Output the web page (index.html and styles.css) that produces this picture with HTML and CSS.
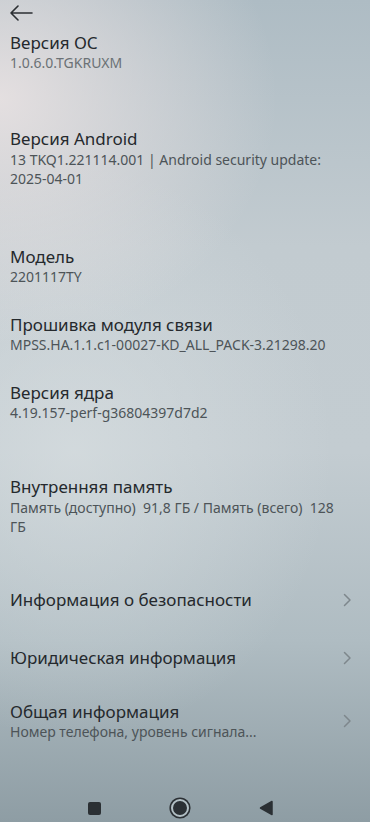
FILE: index.html
```html
<!DOCTYPE html>
<html lang="ru">
<head>
    <meta charset="UTF-8">
    <meta name="viewport" content="width=device-width, initial-scale=1.0">
    <title>Об устройстве</title>
    <link rel="stylesheet" href="styles.css">
</head>
<body>
    <div class="screen">
        <div class="topbar">
            <svg class="back" width="24" height="16" viewBox="0 0 24 16">
                <path d="M23 8H2M9 1L2 8l7 7" fill="none" stroke="#2b2f33" stroke-width="1.6" stroke-linecap="round" stroke-linejoin="round"/>
            </svg>
        </div>

        <div class="content">
            <div class="item item-os">
                <div class="item-title">Версия ОС</div>
                <div class="item-sub">1.0.6.0.TGKRUXM</div>
            </div>

            <div class="item item-android">
                <div class="item-title">Версия Android</div>
                <div class="item-sub">13 TKQ1.221114.001 | Android security update: <span class="nowrap">2025-04-01</span></div>
            </div>

            <div class="item item-model">
                <div class="item-title">Модель</div>
                <div class="item-sub">2201117TY</div>
            </div>

            <div class="item item-near">
                <div class="item-title">Прошивка модуля связи</div>
                <div class="item-sub">MPSS.HA.1.1.c1-00027-KD_ALL_PACK-3.21298.20</div>
            </div>

            <div class="item item-near">
                <div class="item-title">Версия ядра</div>
                <div class="item-sub">4.19.157-perf-g36804397d7d2</div>
            </div>

            <div class="item item-memory">
                <div class="item-title">Внутренняя память</div>
                <div class="item-sub">Память (доступно)&nbsp; 91,8 ГБ / Память (всего)&nbsp; 128 ГБ</div>
            </div>

            <div class="links">
                <div class="link-row">
                    <div class="item-title">Информация о безопасности</div>
                    <svg class="chevron" width="9" height="14" viewBox="0 0 9 14"><path d="M1.5 1.5L7 7l-5.5 5.5" fill="none" stroke="#7e878c" stroke-width="1.5" stroke-linecap="round" stroke-linejoin="round"/></svg>
                </div>
                <div class="link-row">
                    <div class="item-title">Юридическая информация</div>
                    <svg class="chevron" width="9" height="14" viewBox="0 0 9 14"><path d="M1.5 1.5L7 7l-5.5 5.5" fill="none" stroke="#7e878c" stroke-width="1.5" stroke-linecap="round" stroke-linejoin="round"/></svg>
                </div>
                <div class="link-row link-row-tall">
                    <div>
                        <div class="item-title">Общая информация</div>
                        <div class="item-sub">Номер телефона, уровень сигнала...</div>
                    </div>
                    <svg class="chevron" width="9" height="14" viewBox="0 0 9 14"><path d="M1.5 1.5L7 7l-5.5 5.5" fill="none" stroke="#7e878c" stroke-width="1.5" stroke-linecap="round" stroke-linejoin="round"/></svg>
                </div>
            </div>
        </div>

        <div class="navbar">
            <div class="nav-btn"><span class="nav-square"></span></div>
            <div class="nav-btn"><span class="nav-home"></span></div>
            <div class="nav-btn">
                <svg width="14" height="16" viewBox="0 0 14 16"><path d="M13 1.5v13L1.5 8z" fill="#2b3034" stroke="#2b3034" stroke-width="1.5" stroke-linejoin="round"/></svg>
            </div>
        </div>
    </div>
</body>
</html>
```

FILE: styles.css
```css
body {
    margin: 0;
    font-family: "Noto Sans", Roboto, sans-serif;
}

.screen {
    width: 370px;
    height: 822px;
    display: flex;
    flex-direction: column;
    overflow: hidden;
    background:
        radial-gradient(ellipse 75% 30% at 0% 12%, rgba(236, 228, 228, 0.85), rgba(236, 228, 228, 0) 100%),
        radial-gradient(ellipse 70% 35% at 20% 55%, rgba(220, 226, 228, 0.6), rgba(220, 226, 228, 0) 100%),
        linear-gradient(180deg, #aebcc4 0%, #c2cbd0 30%, #c3ccd1 55%, #afbcc2 78%, #8e9da4 100%);
}

.topbar {
    height: 32px;
    flex-shrink: 0;
    padding-left: 9px;
    box-sizing: border-box;
    padding-top: 5px;
}

.back {
    display: block;
}

.content {
    flex: 1;
    overflow: hidden;
    padding: 0 10px;
}

.item {
    max-width: 336px;
}

.item-title {
    font-size: 17px;
    line-height: 22px;
    color: #25292d;
}

.item-sub {
    font-size: 14px;
    line-height: 18px;
    color: #4d5458;
}

.nowrap {
    white-space: nowrap;
}

.item-os .item-sub {
    color: #6b7175;
}

.item-android {
    margin-top: 56px;
}

.item-android .item-sub,
.item-memory .item-sub {
    line-height: 19px;
}

.item-model {
    margin-top: 58px;
}

.item-near {
    margin-top: 28px;
}

.item-memory {
    margin-top: 54px;
}

.links {
    margin-top: 35px;
}

.link-row {
    height: 58px;
    display: flex;
    align-items: center;
    justify-content: space-between;
    padding-right: 8px;
}

.link-row-tall {
    height: 68px;
}

.chevron {
    display: block;
    flex-shrink: 0;
}

.navbar {
    height: 40px;
    flex-shrink: 0;
    display: grid;
    grid-template-columns: repeat(3, 86px);
    justify-content: center;
    align-items: center;
    padding-top: 12px;
    padding-right: 10px;
    box-sizing: border-box;
}

.nav-btn {
    display: flex;
    justify-content: center;
    align-items: center;
}

.nav-square {
    width: 13px;
    height: 13px;
    border-radius: 2px;
    background-color: #2b3034;
}

.nav-home {
    width: 14px;
    height: 14px;
    border-radius: 50%;
    background-color: #2b3034;
    border: 2px solid #b2bfc4;
    box-shadow: 0 0 0 1.6px #2b3034;
}
```
